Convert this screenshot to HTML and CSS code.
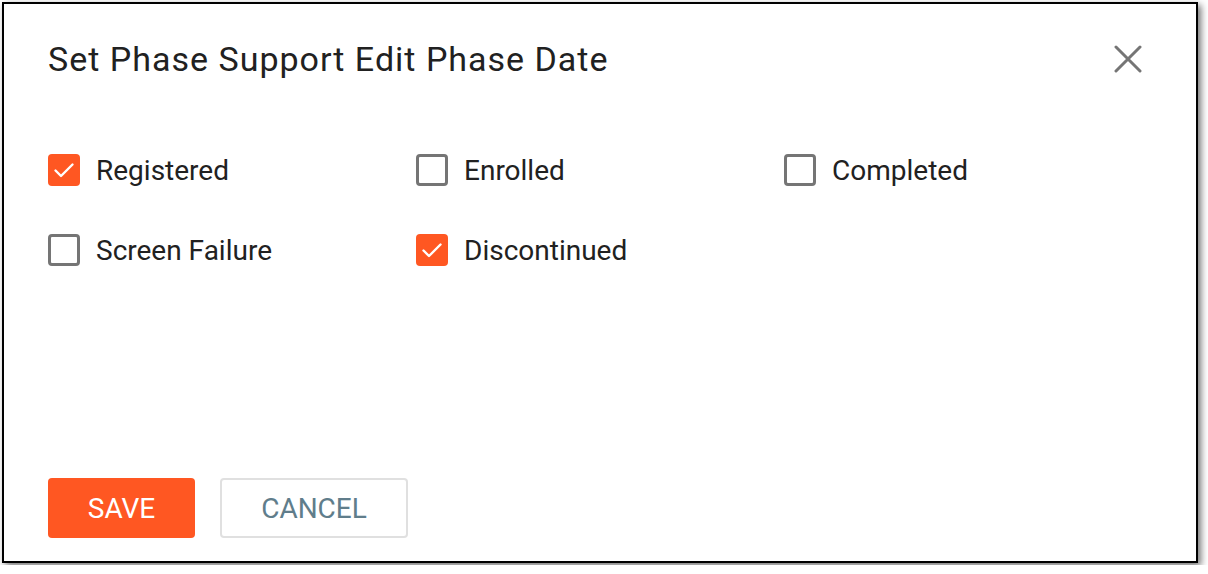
FILE: index.html
```html
<!DOCTYPE html>
<html lang="en">
<head>
    <meta charset="UTF-8">
    <title>Set Phase Support Edit Phase Date</title>
    <link rel="stylesheet" href="styles.css">
</head>
<body>

<div class="dialog">
    <div class="dialog-header">
        <h1>Set Phase Support Edit Phase Date</h1>
        <button class="close" type="button" aria-label="Close">
            <svg width="28" height="28" viewBox="0 0 28 28">
                <path d="M2 2 L26 26 M26 2 L2 26" stroke="#757575" stroke-width="3" stroke-linecap="round"/>
            </svg>
        </button>
    </div>

    <div class="phases">
        <label class="check checked"><span class="box"><svg viewBox="0 0 32 32"><path d="M7.5 16.5 L13 22 L24.5 10.5" fill="none" stroke="#fff" stroke-width="2.4" stroke-linecap="round" stroke-linejoin="round"/></svg></span>Registered</label>
        <label class="check"><span class="box"></span>Enrolled</label>
        <label class="check"><span class="box"></span>Completed</label>
        <label class="check"><span class="box"></span>Screen Failure</label>
        <label class="check checked"><span class="box"><svg viewBox="0 0 32 32"><path d="M7.5 16.5 L13 22 L24.5 10.5" fill="none" stroke="#fff" stroke-width="2.4" stroke-linecap="round" stroke-linejoin="round"/></svg></span>Discontinued</label>
    </div>

    <div class="actions">
        <button class="btn btn-save" type="submit">SAVE</button>
        <button class="btn btn-cancel" type="button">CANCEL</button>
    </div>
</div>

</body>
</html>
```

FILE: styles.css
```css
* {
    box-sizing: border-box;
}
body {
    margin: 0;
    background: #fff;
    font-family: Roboto, "Liberation Sans", Arial, sans-serif;
    color: #212121;
}
div.dialog {
    display: flex;
    flex-direction: column;
    width: 1196px;
    height: 561px;
    margin: 2px;
    border: 2px solid #000;
    background: #fff;
    box-shadow: 3px 3px 7px rgba(0,0,0,.55);
    padding: 0 44px 23px 44px;
}
.dialog-header {
    display: flex;
    align-items: center;
    justify-content: space-between;
    padding-top: 36px;
}
.dialog-header h1 {
    margin: 0;
    font-size: 34px;
    font-weight: 400;
    letter-spacing: 1px;
    line-height: 38px;
    color: #212121;
}
.close {
    border: 0;
    background: none;
    padding: 0;
    margin-right: 10px;
    width: 28px;
    height: 28px;
    cursor: pointer;
}
.close svg {
    display: block;
}
.phases {
    display: grid;
    grid-template-columns: repeat(3, 368px);
    row-gap: 48px;
    margin-top: 76px;
}
.check {
    display: flex;
    align-items: center;
    height: 32px;
    font-size: 28px;
    color: #212121;
}
.box {
    width: 32px;
    height: 32px;
    margin-right: 16px;
    border: 3px solid #757575;
    border-radius: 4px;
    flex-shrink: 0;
}
.check.checked .box {
    background: #ff5722;
    border: 0;
}
.box svg {
    display: block;
    width: 32px;
    height: 32px;
}
.actions {
    display: flex;
    gap: 25px;
    margin-top: auto;
}
.btn {
    height: 60px;
    font-family: Roboto, "Liberation Sans", Arial, sans-serif;
    font-size: 28px;
    border-radius: 4px;
    cursor: pointer;
}
.btn-save {
    width: 147px;
    background: #ff5722;
    color: #fff;
    border: 0;
}
.btn-cancel {
    width: 188px;
    background: #fff;
    color: #607d8b;
    border: 2px solid #e0e0e0;
}
```
